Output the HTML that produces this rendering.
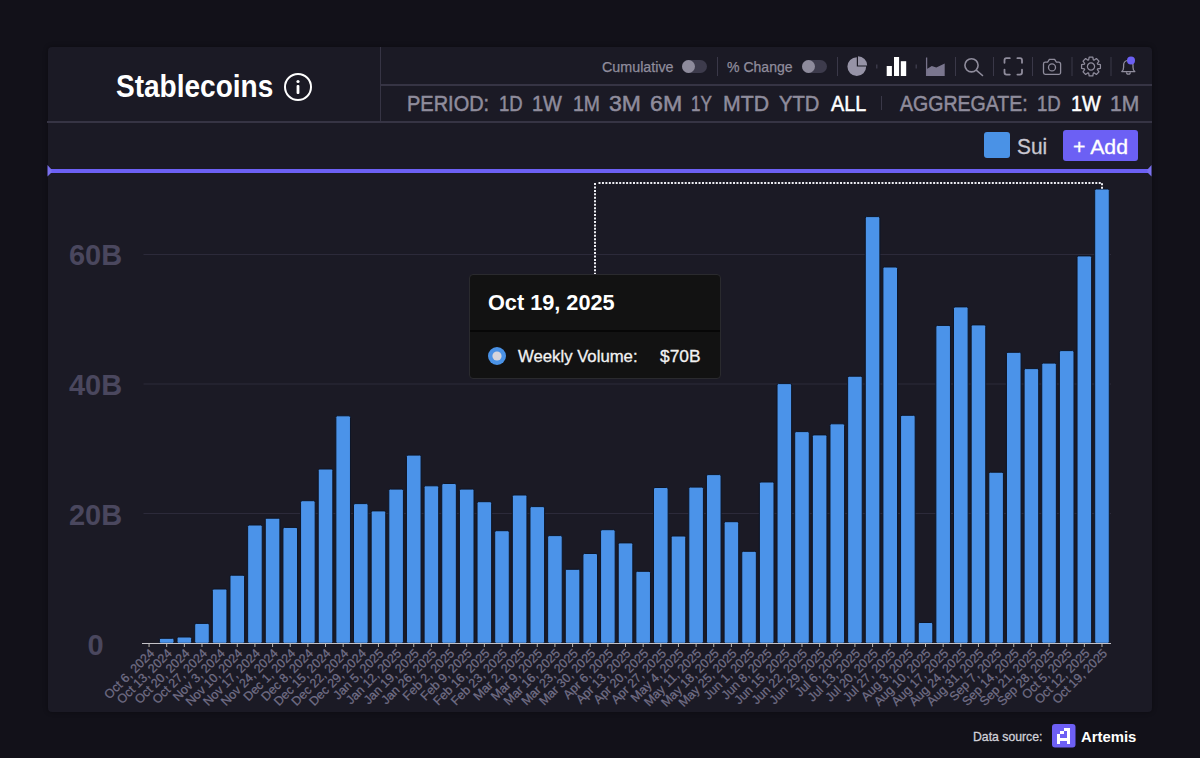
<!DOCTYPE html>
<html><head><meta charset="utf-8">
<style>
*{margin:0;padding:0;box-sizing:border-box}
html,body{width:1200px;height:758px;overflow:hidden;background:#121119;font-family:"Liberation Sans",sans-serif}
.abs{position:absolute}
.card{position:absolute;left:48px;top:47px;width:1104px;height:665px;background:#1b1a25;border-radius:4px;box-shadow:0 0 4px 1px rgba(0,0,0,.25)}
.chart{position:absolute;left:0;top:0}
.t{position:absolute;white-space:nowrap;line-height:1}
.hl{position:absolute;height:1px;background:#363444}
.vl{position:absolute;width:1px;background:#363444}
.dv{position:absolute;width:1px;background:#3a3848}
.grey{color:#8f8c9c;-webkit-text-stroke:0.25px currentColor}
.tog{position:absolute;width:25px;height:13px;border-radius:7px;background:#3d3b4c}
.tog::before{content:"";position:absolute;left:0;top:0;width:13px;height:13px;border-radius:50%;background:#8e8b9c}
.per{position:absolute;font-weight:normal;-webkit-text-stroke:0.5px currentColor;color:#8f8c9c;line-height:1;white-space:nowrap}
.per.on{color:#ffffff}
</style></head>
<body>
<div class="card"></div>
<svg class="chart" width="1200" height="758" viewBox="0 0 1200 758">
<g stroke="#2c2a3a" stroke-width="1">
<path d="M143.5 254.5H1111M143.5 384H1111M143.5 513.5H1111"/>
</g>
<g fill="#4b93e9" stroke="#0d1526" stroke-width="1">
<rect x="159.40" y="638.30" width="14.6" height="5.00" rx="1.5"/><rect x="177.04" y="637.00" width="14.6" height="6.30" rx="1.5"/><rect x="194.69" y="623.40" width="14.6" height="19.90" rx="1.5"/><rect x="212.34" y="589.00" width="14.6" height="54.30" rx="1.5"/><rect x="229.98" y="575.20" width="14.6" height="68.10" rx="1.5"/><rect x="247.63" y="525.00" width="14.6" height="118.30" rx="1.5"/><rect x="265.28" y="518.20" width="14.6" height="125.10" rx="1.5"/><rect x="282.93" y="527.40" width="14.6" height="115.90" rx="1.5"/><rect x="300.57" y="500.70" width="14.6" height="142.60" rx="1.5"/><rect x="318.22" y="469.00" width="14.6" height="174.30" rx="1.5"/><rect x="335.87" y="415.80" width="14.6" height="227.50" rx="1.5"/><rect x="353.51" y="503.60" width="14.6" height="139.70" rx="1.5"/><rect x="371.16" y="510.90" width="14.6" height="132.40" rx="1.5"/><rect x="388.81" y="489.10" width="14.6" height="154.20" rx="1.5"/><rect x="406.45" y="455.10" width="14.6" height="188.20" rx="1.5"/><rect x="424.10" y="485.80" width="14.6" height="157.50" rx="1.5"/><rect x="441.75" y="483.50" width="14.6" height="159.80" rx="1.5"/><rect x="459.40" y="489.10" width="14.6" height="154.20" rx="1.5"/><rect x="477.04" y="501.70" width="14.6" height="141.60" rx="1.5"/><rect x="494.69" y="530.70" width="14.6" height="112.60" rx="1.5"/><rect x="512.34" y="495.00" width="14.6" height="148.30" rx="1.5"/><rect x="529.98" y="506.60" width="14.6" height="136.70" rx="1.5"/><rect x="547.63" y="535.60" width="14.6" height="107.70" rx="1.5"/><rect x="565.28" y="569.30" width="14.6" height="74.00" rx="1.5"/><rect x="582.92" y="553.50" width="14.6" height="89.80" rx="1.5"/><rect x="600.57" y="529.70" width="14.6" height="113.60" rx="1.5"/><rect x="618.22" y="542.90" width="14.6" height="100.40" rx="1.5"/><rect x="635.87" y="571.30" width="14.6" height="72.00" rx="1.5"/><rect x="653.51" y="487.50" width="14.6" height="155.80" rx="1.5"/><rect x="671.16" y="536.00" width="14.6" height="107.30" rx="1.5"/><rect x="688.81" y="487.10" width="14.6" height="156.20" rx="1.5"/><rect x="706.45" y="474.60" width="14.6" height="168.70" rx="1.5"/><rect x="724.10" y="521.70" width="14.6" height="121.60" rx="1.5"/><rect x="741.75" y="551.30" width="14.6" height="92.00" rx="1.5"/><rect x="759.39" y="482.00" width="14.6" height="161.30" rx="1.5"/><rect x="777.04" y="383.60" width="14.6" height="259.70" rx="1.5"/><rect x="794.69" y="431.60" width="14.6" height="211.70" rx="1.5"/><rect x="812.34" y="434.90" width="14.6" height="208.40" rx="1.5"/><rect x="829.98" y="423.80" width="14.6" height="219.50" rx="1.5"/><rect x="847.63" y="376.20" width="14.6" height="267.10" rx="1.5"/><rect x="865.28" y="216.60" width="14.6" height="426.70" rx="1.5"/><rect x="882.92" y="267.00" width="14.6" height="376.30" rx="1.5"/><rect x="900.57" y="415.30" width="14.6" height="228.00" rx="1.5"/><rect x="918.22" y="622.50" width="14.6" height="20.80" rx="1.5"/><rect x="935.87" y="325.40" width="14.6" height="317.90" rx="1.5"/><rect x="953.51" y="306.90" width="14.6" height="336.40" rx="1.5"/><rect x="971.16" y="324.90" width="14.6" height="318.40" rx="1.5"/><rect x="988.81" y="472.20" width="14.6" height="171.10" rx="1.5"/><rect x="1006.45" y="352.30" width="14.6" height="291.00" rx="1.5"/><rect x="1024.10" y="368.60" width="14.6" height="274.70" rx="1.5"/><rect x="1041.75" y="363.10" width="14.6" height="280.20" rx="1.5"/><rect x="1059.39" y="350.60" width="14.6" height="292.70" rx="1.5"/><rect x="1077.04" y="255.90" width="14.6" height="387.40" rx="1.5"/><rect x="1094.69" y="189.00" width="14.6" height="454.30" rx="1.5"/>
</g>
<path d="M142 643.5H1111" stroke="#c4c2c8" stroke-width="1"/>
<path d="M149.05 644v3M166.70 644v3M184.34 644v3M201.99 644v3M219.64 644v3M237.28 644v3M254.93 644v3M272.58 644v3M290.23 644v3M307.87 644v3M325.52 644v3M343.17 644v3M360.81 644v3M378.46 644v3M396.11 644v3M413.75 644v3M431.40 644v3M449.05 644v3M466.70 644v3M484.34 644v3M501.99 644v3M519.64 644v3M537.28 644v3M554.93 644v3M572.58 644v3M590.22 644v3M607.87 644v3M625.52 644v3M643.17 644v3M660.81 644v3M678.46 644v3M696.11 644v3M713.75 644v3M731.40 644v3M749.05 644v3M766.69 644v3M784.34 644v3M801.99 644v3M819.64 644v3M837.28 644v3M854.93 644v3M872.58 644v3M890.22 644v3M907.87 644v3M925.52 644v3M943.16 644v3M960.81 644v3M978.46 644v3M996.11 644v3M1013.75 644v3M1031.40 644v3M1049.05 644v3M1066.69 644v3M1084.34 644v3M1101.99 644v3" stroke="#b9b6b0" stroke-width="1"/>
<g fill="#716e86" stroke="#716e86" stroke-width="0.25" font-size="12.5" text-anchor="end" font-family="Liberation Sans, sans-serif">
<text transform="translate(155.05 654) rotate(-45)">Oct 6, 2024</text><text transform="translate(172.70 654) rotate(-45)">Oct 13, 2024</text><text transform="translate(190.34 654) rotate(-45)">Oct 20, 2024</text><text transform="translate(207.99 654) rotate(-45)">Oct 27, 2024</text><text transform="translate(225.64 654) rotate(-45)">Nov 3, 2024</text><text transform="translate(243.28 654) rotate(-45)">Nov 10, 2024</text><text transform="translate(260.93 654) rotate(-45)">Nov 17, 2024</text><text transform="translate(278.58 654) rotate(-45)">Nov 24, 2024</text><text transform="translate(296.23 654) rotate(-45)">Dec 1, 2024</text><text transform="translate(313.87 654) rotate(-45)">Dec 8, 2024</text><text transform="translate(331.52 654) rotate(-45)">Dec 15, 2024</text><text transform="translate(349.17 654) rotate(-45)">Dec 22, 2024</text><text transform="translate(366.81 654) rotate(-45)">Dec 29, 2024</text><text transform="translate(384.46 654) rotate(-45)">Jan 5, 2025</text><text transform="translate(402.11 654) rotate(-45)">Jan 12, 2025</text><text transform="translate(419.75 654) rotate(-45)">Jan 19, 2025</text><text transform="translate(437.40 654) rotate(-45)">Jan 26, 2025</text><text transform="translate(455.05 654) rotate(-45)">Feb 2, 2025</text><text transform="translate(472.70 654) rotate(-45)">Feb 9, 2025</text><text transform="translate(490.34 654) rotate(-45)">Feb 16, 2025</text><text transform="translate(507.99 654) rotate(-45)">Feb 23, 2025</text><text transform="translate(525.64 654) rotate(-45)">Mar 2, 2025</text><text transform="translate(543.28 654) rotate(-45)">Mar 9, 2025</text><text transform="translate(560.93 654) rotate(-45)">Mar 16, 2025</text><text transform="translate(578.58 654) rotate(-45)">Mar 23, 2025</text><text transform="translate(596.22 654) rotate(-45)">Mar 30, 2025</text><text transform="translate(613.87 654) rotate(-45)">Apr 6, 2025</text><text transform="translate(631.52 654) rotate(-45)">Apr 13, 2025</text><text transform="translate(649.17 654) rotate(-45)">Apr 20, 2025</text><text transform="translate(666.81 654) rotate(-45)">Apr 27, 2025</text><text transform="translate(684.46 654) rotate(-45)">May 4, 2025</text><text transform="translate(702.11 654) rotate(-45)">May 11, 2025</text><text transform="translate(719.75 654) rotate(-45)">May 18, 2025</text><text transform="translate(737.40 654) rotate(-45)">May 25, 2025</text><text transform="translate(755.05 654) rotate(-45)">Jun 1, 2025</text><text transform="translate(772.69 654) rotate(-45)">Jun 8, 2025</text><text transform="translate(790.34 654) rotate(-45)">Jun 15, 2025</text><text transform="translate(807.99 654) rotate(-45)">Jun 22, 2025</text><text transform="translate(825.64 654) rotate(-45)">Jun 29, 2025</text><text transform="translate(843.28 654) rotate(-45)">Jul 6, 2025</text><text transform="translate(860.93 654) rotate(-45)">Jul 13, 2025</text><text transform="translate(878.58 654) rotate(-45)">Jul 20, 2025</text><text transform="translate(896.22 654) rotate(-45)">Jul 27, 2025</text><text transform="translate(913.87 654) rotate(-45)">Aug 3, 2025</text><text transform="translate(931.52 654) rotate(-45)">Aug 10, 2025</text><text transform="translate(949.16 654) rotate(-45)">Aug 17, 2025</text><text transform="translate(966.81 654) rotate(-45)">Aug 24, 2025</text><text transform="translate(984.46 654) rotate(-45)">Aug 31, 2025</text><text transform="translate(1002.11 654) rotate(-45)">Sep 7, 2025</text><text transform="translate(1019.75 654) rotate(-45)">Sep 14, 2025</text><text transform="translate(1037.40 654) rotate(-45)">Sep 21, 2025</text><text transform="translate(1055.05 654) rotate(-45)">Sep 28, 2025</text><text transform="translate(1072.69 654) rotate(-45)">Oct 5, 2025</text><text transform="translate(1090.34 654) rotate(-45)">Oct 12, 2025</text><text transform="translate(1107.99 654) rotate(-45)">Oct 19, 2025</text>
</g>
<g fill="#4a475e" font-size="29" font-weight="bold" text-anchor="middle" font-family="Liberation Sans, sans-serif">
<text x="95.6" y="264.5">60B</text>
<text x="95.6" y="395">40B</text>
<text x="95.6" y="524.6">20B</text>
<text x="95.6" y="654.5">0</text>
</g>
<path d="M595 183V274" fill="none" stroke="#eeeef4" stroke-width="2" stroke-dasharray="2 1.45"/><path d="M598.5 183H1102V189" fill="none" stroke="#eeeef4" stroke-width="2" stroke-dasharray="2 1.45"/>
</svg>
<!-- header -->
<div class="t" style="left:116.46px;top:70.84px;font-size:31.01px;transform:scaleX(0.904);transform-origin:0 0;font-weight:bold;color:#fff">Stablecoins</div>
<svg class="abs" style="left:283px;top:72px" width="30" height="30" viewBox="0 0 30 30"><circle cx="15" cy="15" r="13" fill="none" stroke="#fff" stroke-width="2"/><circle cx="15" cy="9.5" r="1.6" fill="#fff"/><rect x="13.6" y="13" width="2.8" height="9" rx="1" fill="#fff"/></svg>
<div class="vl" style="left:380px;top:47px;height:74px"></div>
<div class="hl" style="left:47px;top:121px;width:1105px;height:2px"></div>
<div class="hl" style="left:381px;top:84px;width:771px;height:2px"></div>

<!-- toolbar -->
<div class="t grey" style="left:601.79px;top:60.08px;font-size:14.49px;transform:scaleX(0.987);transform-origin:0 0">Cumulative</div>
<div class="tog" style="left:682px;top:60px"></div>
<div class="dv" style="left:717px;top:57px;height:19px"></div>
<div class="t grey" style="left:726.94px;top:60.08px;font-size:14.49px;transform:scaleX(0.97);transform-origin:0 0">% Change</div>
<div class="tog" style="left:802px;top:60px"></div>
<div class="dv" style="left:837px;top:57px;height:19px"></div>
<svg class="abs" style="left:840px;top:50px" width="320" height="32" viewBox="840 50 320 32">
 <!-- pie -->
 <path d="M856.8 57.2A9.4 9.4 0 1 0 866.2 66.6H856.8Z" fill="#9693a6"/>
 <path d="M858 56.2V65.4H867.2A9.2 9.2 0 0 0 858 56.2Z" fill="#9693a6"/>
 <rect x="876" y="64.5" width="1.5" height="4" fill="#3a3848"/>
 <!-- bars -->
 <rect x="886.7" y="66" width="5.2" height="10" fill="#fff"/>
 <rect x="894" y="57" width="5.1" height="19" fill="#fff"/>
 <rect x="900.8" y="61.2" width="5.4" height="14.8" fill="#fff"/>
 <rect x="915.5" y="64.5" width="1.5" height="4" fill="#3a3848"/>
 <!-- area -->
 <path d="M926 76V69.4L931.8 66L936.3 67.5L944.7 63.6V76Z" fill="#7a768e"/>
 <path d="M926.6 57.5V76" stroke="#77738a" stroke-width="1.3"/>
 <rect x="955" y="57" width="1" height="19" fill="#3a3848"/>
 <!-- search -->
 <circle cx="971.5" cy="65.3" r="6.6" fill="none" stroke="#8f8c9c" stroke-width="1.6"/>
 <path d="M976.5 70.3L982.5 75.5" stroke="#8f8c9c" stroke-width="1.6" stroke-linecap="round"/>
 <rect x="993" y="57" width="1" height="19" fill="#3a3848"/>
 <!-- fullscreen -->
 <path d="M1004.5 62.8V60.2A2 2 0 0 1 1006.5 58.2H1009.8M1017.4 58.2H1020A2 2 0 0 1 1022 60.2V62.8M1022 69.6V72.6A2 2 0 0 1 1020 74.6H1017.4M1009.8 74.6H1006.5A2 2 0 0 1 1004.5 72.6V69.6" fill="none" stroke="#8f8c9c" stroke-width="1.8" stroke-linecap="round"/>
 <rect x="1032" y="57" width="1" height="19" fill="#3a3848"/>
 <!-- camera -->
 <path d="M1045.3 62.2H1047.6L1049.4 59.4H1054.6L1056.4 62.2H1058.8A1.8 1.8 0 0 1 1060.6 64V72.6A1.8 1.8 0 0 1 1058.8 74.4H1045.3A1.8 1.8 0 0 1 1043.5 72.6V64A1.8 1.8 0 0 1 1045.3 62.2Z" fill="none" stroke="#8f8c9c" stroke-width="1.3" stroke-linejoin="round"/>
 <circle cx="1052" cy="67.4" r="3.5" fill="none" stroke="#8f8c9c" stroke-width="1.3"/>
 <rect x="1071.5" y="57" width="1" height="19" fill="#3a3848"/>
 <!-- gear -->
 <g transform="translate(1091 66.5)" fill="none" stroke="#8f8c9c" stroke-width="1.25">
  <path d="M6.60 -2.34 L9.42 -1.83 L9.42 1.83 L6.60 2.34 L6.32 3.01 L7.96 5.37 L5.37 7.96 L3.01 6.32 L2.34 6.60 L1.83 9.42 L-1.83 9.42 L-2.34 6.60 L-3.01 6.32 L-5.37 7.96 L-7.96 5.37 L-6.32 3.01 L-6.60 2.34 L-9.42 1.83 L-9.42 -1.83 L-6.60 -2.34 L-6.32 -3.01 L-7.96 -5.37 L-5.37 -7.96 L-3.01 -6.32 L-2.34 -6.60 L-1.83 -9.42 L1.83 -9.42 L2.34 -6.60 L3.01 -6.32 L5.37 -7.96 L7.96 -5.37 L6.32 -3.01Z" stroke-linejoin="round"/>
  <circle r="3.6" />
 </g>
 <rect x="1110.5" y="57" width="1" height="19" fill="#3a3848"/>
 <!-- bell -->
 <path d="M1121.8 71.6Q1123.6 70.2 1123.6 67.2V65A4.7 4.7 0 0 1 1133 65V67.2Q1133 70.2 1134.8 71.6Z" fill="none" stroke="#8f8c9c" stroke-width="1.3" stroke-linejoin="round"/>
 <path d="M1126.5 72.2A1.9 1.9 0 0 0 1130.3 72.2" fill="none" stroke="#8f8c9c" stroke-width="1.3"/>
 <circle cx="1131" cy="60.6" r="4" fill="#6c60f4"/>
</svg>

<!-- period row -->
<div class="per" style="left:407.15px;top:94.37px;font-size:21.45px;transform:scaleX(0.932);transform-origin:0 0">PERIOD:</div>
<div class="per" style="left:498.92px;top:94.37px;font-size:21.45px;transform:scaleX(0.864);transform-origin:0 0">1D</div>
<div class="per" style="left:532.15px;top:94.37px;font-size:21.45px;transform:scaleX(0.931);transform-origin:0 0">1W</div>
<div class="per" style="left:572.85px;top:94.37px;font-size:21.45px;transform:scaleX(0.906);transform-origin:0 0">1M</div>
<div class="per" style="left:608.88px;top:94.37px;font-size:21.45px;transform:scaleX(1.072);transform-origin:0 0">3M</div>
<div class="per" style="left:649.64px;top:94.37px;font-size:21.45px;transform:scaleX(1.08);transform-origin:0 0">6M</div>
<div class="per" style="left:691.04px;top:94.37px;font-size:21.45px;transform:scaleX(0.795);transform-origin:0 0">1Y</div>
<div class="per" style="left:722.8px;top:94.37px;font-size:21.45px;transform:scaleX(0.99);transform-origin:0 0">MTD</div>
<div class="per" style="left:779.4px;top:94.37px;font-size:21.45px;transform:scaleX(0.942);transform-origin:0 0">YTD</div>
<div class="per on" style="left:830.7px;top:94.37px;font-size:21.45px;transform:scaleX(0.922);transform-origin:0 0">ALL</div>
<div class="dv" style="left:881px;top:96px;height:14px"></div>
<div class="per" style="left:900.1px;top:94.37px;font-size:21.45px;transform:scaleX(0.911);transform-origin:0 0">AGGREGATE:</div>
<div class="per" style="left:1037.01px;top:94.37px;font-size:21.45px;transform:scaleX(0.868);transform-origin:0 0">1D</div>
<div class="per on" style="left:1070.71px;top:94.37px;font-size:21.45px;transform:scaleX(0.929);transform-origin:0 0">1W</div>
<div class="per" style="left:1109.92px;top:94.37px;font-size:21.45px;transform:scaleX(0.982);transform-origin:0 0">1M</div>

<!-- legend -->
<div class="abs" style="left:984px;top:132px;width:26px;height:26px;border-radius:3px;background:#4a92e6"></div>
<div class="t" style="left:1017.46px;top:137.09px;font-size:21.3px;transform:scaleX(0.979);transform-origin:0 0;-webkit-text-stroke:0.3px currentColor;color:#c9c7d1">Sui</div>
<div class="abs" style="left:1063px;top:130px;width:75px;height:31px;border-radius:3px;background:#6c60f4"></div>
<div class="t" style="left:1072.94px;top:137.56px;font-size:19.93px;transform:scaleX(1.067);transform-origin:0 0;-webkit-text-stroke:0.3px currentColor;color:#fff">+ Add</div>

<!-- purple slider line -->
<svg class="abs" style="left:40px;top:160px" width="1120" height="22" viewBox="40 160 1120 22">
 <rect x="50" y="169" width="1100" height="4" fill="#6c60f4"/>
 <path d="M47.5 165L51.5 169.5V172.5L47.5 176.5Z" fill="#7a70f0"/>
 <path d="M1151.5 165L1147.5 169.5V172.5L1151.5 176.5Z" fill="#7a70f0"/>
</svg>

<!-- tooltip -->
<div class="abs" style="left:469px;top:274px;width:252px;height:105px;background:#121212;border:1px solid #2a2a2e;border-radius:4px"></div>
<div class="abs" style="left:470px;top:330px;width:250px;height:2px;background:#070707"></div>
<div class="t" style="left:487.93px;top:292.01px;font-size:21.16px;transform:scaleX(1.025);transform-origin:0 0;font-weight:bold;color:#fff">Oct 19, 2025</div>
<svg class="abs" style="left:487px;top:346px" width="20" height="20" viewBox="0 0 20 20"><circle cx="10" cy="10" r="9" fill="#4a92e6"/><circle cx="10" cy="10" r="4.6" fill="#d5d5dc"/></svg>
<div class="t" style="left:517.83px;top:349.29px;font-size:16.96px;transform:scaleX(0.987);transform-origin:0 0;-webkit-text-stroke:0.3px currentColor;color:#f2f2f2">Weekly Volume:</div>
<div class="t" style="left:659.63px;top:348.79px;font-size:16.96px;transform:scaleX(1.024);transform-origin:0 0;-webkit-text-stroke:0.3px currentColor;color:#f2f2f2">$70B</div>

<!-- footer -->
<div class="t" style="left:972.52px;top:731.45px;font-size:12.17px;transform:scaleX(1.008);transform-origin:0 0;-webkit-text-stroke:0.3px currentColor;color:#d0d0d8">Data source:</div>
<svg class="abs" style="left:1052px;top:724px" width="24" height="24" viewBox="0 0 24 24"><rect width="23.5" height="23.5" rx="3" fill="#6d5ff4"/><path d="M11.50 3.80h3.3v3.3h-3.3ZM14.80 3.80h3.3v3.3h-3.3ZM8.20 7.10h3.3v3.3h-3.3ZM14.80 7.10h3.3v3.3h-3.3ZM4.90 10.40h3.3v3.3h-3.3ZM14.80 10.40h3.3v3.3h-3.3ZM4.90 13.70h3.3v3.3h-3.3ZM8.20 13.70h3.3v3.3h-3.3ZM11.50 13.70h3.3v3.3h-3.3ZM14.80 13.70h3.3v3.3h-3.3ZM4.90 17.00h3.3v3.3h-3.3ZM14.80 17.00h3.3v3.3h-3.3Z" fill="#fff" shape-rendering="crispEdges"/></svg>
<div class="t" style="left:1080.65px;top:729.91px;font-size:14.93px;transform:scaleX(0.997);transform-origin:0 0;font-weight:bold;color:#fff">Artemis</div>
</body></html>
